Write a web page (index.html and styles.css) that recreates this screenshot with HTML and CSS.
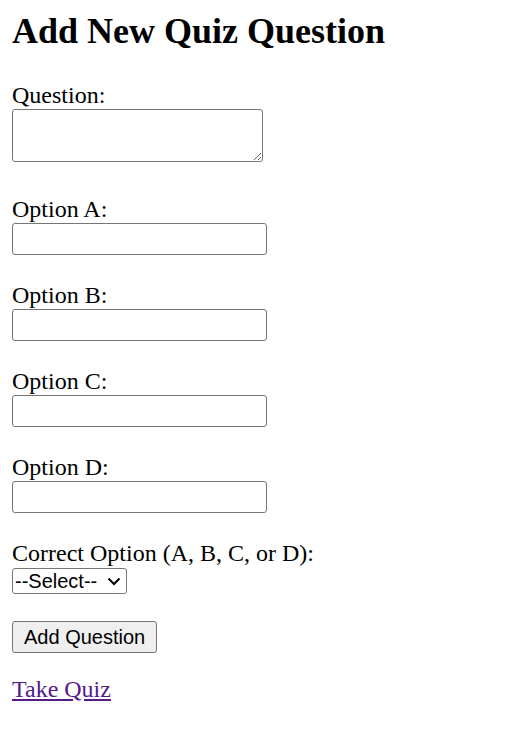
FILE: index.html
```html
<!DOCTYPE html>
<html lang="en">
<head>
<meta charset="utf-8">
<title>Add New Quiz Question</title>
<link rel="stylesheet" href="styles.css">
</head>
<body>
<h1 class="title">Add New Quiz Question</h1>
<form class="quiz-form">
  <div class="field field-question">
    <label class="label" for="q">Question:</label>
    <textarea id="q" class="textarea"></textarea>
  </div>
  <div class="field">
    <label class="label" for="a">Option A:</label>
    <input id="a" class="input" type="text">
  </div>
  <div class="field">
    <label class="label" for="b">Option B:</label>
    <input id="b" class="input" type="text">
  </div>
  <div class="field">
    <label class="label" for="c">Option C:</label>
    <input id="c" class="input" type="text">
  </div>
  <div class="field">
    <label class="label" for="d">Option D:</label>
    <input id="d" class="input" type="text">
  </div>
  <div class="field">
    <label class="label" for="correct">Correct Option (A, B, C, or D):</label>
    <div class="select-wrap">
      <select id="correct" class="select">
        <option>--Select--</option>
        <option>A</option>
        <option>B</option>
        <option>C</option>
        <option>D</option>
      </select>
      <svg class="chevron" width="14" height="9" viewBox="0 0 14 9" aria-hidden="true">
        <path d="M1.5 1.5 L7 7 L12.5 1.5" fill="none" stroke="#000" stroke-width="2"/>
      </svg>
    </div>
  </div>
  <div class="field">
    <button class="button" type="button">Add Question</button>
  </div>
</form>
<div class="footer">
  <a class="link" href="#">Take Quiz</a>
</div>
</body>
</html>
```
FILE: styles.css
```css
html, body {
  background: #fff;
}
body {
  margin: 0;
  padding: 0 12px;
  font-family: "Liberation Serif", "Times New Roman", serif;
  font-size: 24px;
  line-height: 27px;
  color: #000;
}
.title {
  margin: 10px 0 30px;
  font-size: 36px;
  line-height: 42px;
  font-weight: bold;
}
.quiz-form {
  margin: 0;
}
.field {
  display: flex;
  flex-direction: column;
  align-items: flex-start;
  margin-bottom: 27px;
}
.field-question {
  margin-bottom: 34px;
}
.label {
  display: block;
  height: 27px;
}
.textarea,
.input,
.select,
.button {
  box-sizing: border-box;
  font-family: "Liberation Sans", Arial, sans-serif;
  font-size: 20px;
  color: #000;
  border: 1.5px solid #767676;
  border-radius: 3px;
  margin: 0;
}
.textarea {
  width: 251px;
  height: 53px;
  padding: 3px;
  background: #fff;
}
.input {
  width: 255px;
  height: 32px;
  padding: 1px 3px;
  background: #fff;
}
.select-wrap {
  position: relative;
  margin-top: 1px;
  display: flex;
}
.select {
  -webkit-appearance: none;
  appearance: none;
  width: 115px;
  height: 26px;
  padding: 0 2px;
  background: #fff;
}
.chevron {
  position: absolute;
  right: 6px;
  top: 9px;
  pointer-events: none;
}
.button {
  height: 32px;
  padding: 0 11px;
  background: #efefef;
  line-height: 23px;
}
.footer {
  margin-top: -4px;
}
.link {
  color: #551a8b;
  text-decoration: underline;
}
```
